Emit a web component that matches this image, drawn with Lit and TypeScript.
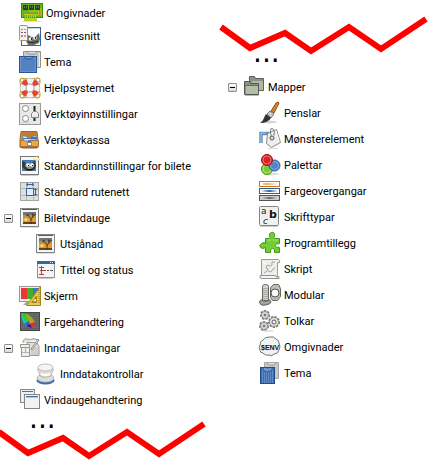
import { LitElement, html, svg, css, nothing, type TemplateResult } from "lit";
import { customElement, property, state } from "lit/decorators.js";

interface Item {
  label: string;
  icon: string;
  lead?: boolean;
  children?: Item[];
}

const photo = svg`
  <rect x="1.500" y="1.500" width="18" height="18" fill="#f4f4f4" stroke="#858585"/>
  <rect x="3" y="2" width="15" height="1" fill="#2f5fae"/>
  <rect x="4" y="5" width="13" height="12" fill="#77766e"/>
  <rect x="4" y="8" width="13" height="3" fill="#b3935c"/>
  <rect x="4" y="11" width="13" height="4" fill="#e79a2c"/>
  <circle cx="7" cy="12.500" r="1.600" fill="#ffd867"/>
  <rect x="4" y="15" width="13" height="2" fill="#63431c"/>
  <path d="M12 17V12L8.500 7M12 13L15 7M13.500 10L17 7M10 9L7 8M14 9L13 6" fill="none" stroke="#3a2d1e" stroke-width="0.800"/>
  <path d="M2 20.500h17" stroke="#ddd"/>`;

const icons: Record<string, TemplateResult> = {
  board: svg`
    <rect x="0.500" y="1.500" width="21" height="14" fill="#62b51c" stroke="#438610"/>
    <path d="M3 16h13v3H3z" fill="#c4d52a"/>
    <path d="M4.500 12v7M6.500 12v7M8.500 12v7M10.500 12v7M12.500 12v7M14.500 12v7" stroke="#d9b62a"/>
    <path d="M3 12.500h9M8.500 10v-1h9v4h-5M20 6v8" fill="none" stroke="#d6be25"/>
    <path d="M2 3h5v5H2zM8 3h5v5H8zM14 3h5v5h-5z" fill="#303b2c"/>
    <path d="M3 5h3M9 5h3M15 5h3" stroke="#91a383" stroke-dasharray="1 1"/>
    <path d="M1 19.500h19" stroke="#ddd"/>`,
  interface: svg`
    <rect x="2.500" y="2.500" width="19" height="18" fill="#fff" stroke="#3465a4"/>
    <path d="M3 3h18v1H3z" fill="#c7daf0"/>
    <path d="M9 10l4 2h3l4-4 1 6-1 4-5 2H9l-2-4z" fill="#6b6b65"/>
    <circle cx="11.500" cy="14" r="1.800" fill="#eee"/><circle cx="16" cy="13" r="1.800" fill="#eee"/>
    <path d="M12 13h1v2h-1zM16 12h1v2h-1z" fill="#222"/><path d="M9 17q5 2 10-1" fill="none" stroke="#292925"/>
    <rect x="0.500" y="0.500" width="8" height="15" rx="1" fill="#f2f2ef" stroke="#969691"/>
    <path d="M2 4h2v1H2z" fill="#58b844"/><path d="M5 4h2v1H5z" fill="#82c878"/>
    <path d="M2 7h2v1H2z" fill="#e52d2d"/><path d="M5 7h2v1H5z" fill="#3d75c4"/>
    <path d="M2 10h2v2H2z" fill="#bd6fbd"/><path d="M5 10h2v2H5z" fill="#eda33e"/>`,
  theme: svg`
    <path d="M4.500 0.500h17v16h-17z" fill="#cacac5" stroke="#92928d"/>
    <path d="M8 1l2 2h6l2-2" fill="#e4e4e0" stroke="#92928d"/><path d="M20.500 2v14" stroke="#eee"/>
    <rect x="0.500" y="5.500" width="17" height="16" fill="#5481c0" stroke="#2c5592"/>
    <path d="M1.500 20.500v-14h15v14z" fill="none" stroke="#6a94cf"/>
    <path d="M5 6l2 2h5l2-2" fill="#6f97cf" stroke="#2c5592"/>`,
  themeLined: svg`
    <path d="M5.500 0.500h14v16h-14z" fill="#c8c8c3" stroke="#a6a6a1"/>
    <path d="M8 1l2 2h5l2-2" fill="#e4e4e0" stroke="#92928d"/>
    <rect x="1.500" y="5.500" width="14" height="16" fill="#396bb1" stroke="#234c88"/>
    <path d="M3.500 8v13M5.500 10v11M7.500 10v11M9.500 10v11M11.500 10v11M13.500 8v13" stroke="#5f8cc8"/>
    <path d="M5 6l1 2h5l1-2" fill="#5a87c5" stroke="#8fb0dc"/>`,
  help: svg`
    <g fill="none" stroke="#c9a438"><path d="M2 9Q-1 1 4 1.500L9 2M13 2l5-1q5 0 2 8M2 13q-3 8 2 8l5-1M13 20l5 1q5-1 2-8"/>
    <circle cx="3" cy="3" r="2"/><circle cx="19" cy="3" r="2"/><circle cx="3" cy="19" r="2"/><circle cx="19" cy="19" r="2"/></g>
    <circle cx="11" cy="11" r="7" fill="none" stroke="#999" stroke-width="6.500"/>
    <circle cx="11" cy="11" r="7" fill="none" stroke="#f3f1ed" stroke-width="5.500"/>
    <circle cx="11" cy="11" r="7" fill="none" stroke="#e4432f" stroke-width="5.500" stroke-dasharray="5 6" stroke-dashoffset="-3"/>
    <circle cx="11" cy="11" r="4" fill="#fff" stroke="#aaa"/>`,
  toolOptions: svg`
    <rect x="0.500" y="0.500" width="21" height="21" fill="#e8e8e6" stroke="#999"/>
    <circle cx="6.500" cy="5.500" r="3" fill="#fff" stroke="#898989"/>
    <circle cx="6.500" cy="15.500" r="3" fill="#fff" stroke="#898989"/>
    <path d="M15.500 3v15" stroke="#222" stroke-width="2"/>
    <path d="M12.500 10.500l2-2h3l2 2v4h-7z" fill="#eee" stroke="#888"/>
    <path d="M2 19.500h9" stroke="#ccc"/>`,
  toolbox: svg`
    <path d="M2 2.500h16l1 8v8H1v-8z" fill="#d68a32" stroke="#a76520"/>
    <path d="M3 3h14v5H3z" fill="#c27a30"/>
    <path d="M1.500 11.500h18v6h-18z" fill="#eca74a" stroke="#b3722b"/>
    <path d="M3 7h4l2 2h3l2-2h4v4h-6l-2 1H5z" fill="#dbe5f0" stroke="#6b87a6"/>
    <path d="M4 9.500h12" stroke="#4a79b8"/><path d="M12 8h6v2h-6z" fill="#4273b1"/>
    <rect x="8.500" y="13.500" width="4" height="3" fill="#fff" stroke="#888"/><path d="M9.500 13v-1h2v1" fill="none" stroke="#555"/>
    <path d="M3 19.500h15" stroke="#b9aea1"/>`,
  newImage: svg`
    <rect x="1.500" y="1.500" width="18" height="18" fill="#f6f6f4" stroke="#777"/>
    <rect x="3" y="5" width="14" height="11" fill="#4679b8"/>
    <path d="M3 6l4 2h6l3-2 1 5-1 3-4 2H8l-5-4z" fill="#373a3a"/>
    <path d="M7 8h7l1 4-3 2H9l-3-3z" fill="#8e8e88"/>
    <circle cx="9" cy="10" r="1.800" fill="#fff"/><circle cx="13" cy="10" r="1.800" fill="#fff"/>
    <path d="M9 10h1v1H9zM13 10h1v1h-1zM8 14h6v1H8z" fill="#181818"/>
    <path d="M18 0l1 3 3 1-3 1-1 3-1-3-3-1 3-1z" fill="#f4cc62"/><circle cx="18" cy="4" r="2" fill="#fff3b1"/>
    <path d="M2 20.500h17" stroke="#ccc"/>`,
  grid: svg`
    <rect x="1.500" y="1.500" width="18" height="18" fill="#dddfdd" stroke="#a4a6a4"/>
    <path d="M2 7.500h17M2 14.500h17M7.500 2v17M14.500 2v17" stroke="#b4b7b4"/>
    <rect x="7.500" y="7.500" width="7" height="7" fill="#e6ebf2" stroke="#3465a4"/>
    <path d="M8 3.500h6M16.500 8v6" stroke="#3465a4"/>
    <path d="M7 3.500l2-2v4zM15 3.500l-2-2v4zM16.500 7l-2 2h4zM16.500 15l-2-2h4z" fill="#3465a4"/>`,
  photo,
  title: svg`
    <rect x="2.500" y="2.500" width="17" height="16" fill="#f4f4f2" stroke="#909090"/>
    <path d="M2 2h18v3H2z" fill="#3465a4"/><path d="M15 3h1v1h-1zM17 3h1v1h-1z" fill="#dce9f8"/>
    <path d="M6.500 7v9" stroke="#c83636"/><path d="M4 8.500h5M4 15.500h5" stroke="#c83636"/><path d="M5 11.500h6" stroke="#9a4545"/>
    <path d="M12 11.500h2M15 11.500h3" stroke="#555"/><path d="M3 19.500h15" stroke="#ccc"/>`,
  display: svg`
    <rect x="0.500" y="1.500" width="21" height="15" fill="#eee" stroke="#999"/>
    <path d="M2 3h6v11H2z" fill="#ed3535"/><path d="M8 3h6v11H8z" fill="#3cb22b"/><path d="M14 3h6v11h-6z" fill="#4377bd"/>
    <path d="M7 17h7v3H4z" fill="#aaa"/>
    <path fill-rule="evenodd" d="M21.500 1.500v19H7.500zM17.500 11v6.500h-5z" fill="#e9c84e" stroke="#a98614"/>
    <path d="M20 5v13" stroke="#8b701b" stroke-dasharray="1 1"/>`,
  color: svg`
    <rect x="1.500" y="1.500" width="19" height="18" fill="#606060" stroke="#454545"/>
    <path d="M4 2v17M7 2v17M10 2v17M13 2v17M16 2v17M19 2v17M2 4h18M2 7h18M2 10h18M2 13h18M2 16h18" stroke="#747474" stroke-dasharray="1 1"/>
    <path d="M2 3q2-2 4 0l7 7-4 5z" fill="#35c735"/><path d="M2 3l7 11-2 1q-5-6-5-12z" fill="#22c9b4"/>
    <path d="M5 13l5-3 1 6z" fill="#335bea"/><path d="M6 2q7 3 10 9l-6-1z" fill="#9cae18"/>
    <path d="M10 9l6 2-5 2z" fill="#f18b24"/><path d="M10 13l7-2-3 5z" fill="#ef2929"/><path d="M7 15l4-2 2 4z" fill="#351b91"/>`,
  devices: svg`
    <path d="M4 6q0-5 4-4t5 0 6 1M8 5.500h10l2 4v9H9z" fill="#e1e1dd" stroke="#999"/>
    <path d="M1.500 7.500h9v3h-9zM2.500 10.500v9h8v-9" fill="#eeeeeb" stroke="#969691"/>
    <path d="M6.500 11v4M3 15.500h7" stroke="#b5b5b0"/>
    <path d="M12 10h7v8h-7z" fill="#d0d0cb"/><path d="M12 12L19 2l1 1-7 10z" fill="#f5f5f1" stroke="#8f8f8a"/>`,
  controller: svg`
    <ellipse cx="10.500" cy="17.500" rx="9" ry="4" fill="#3d69ac"/><ellipse cx="10.500" cy="15" rx="8.500" ry="4" fill="#deded9" stroke="#bbb"/>
    <path d="M3 5v3q2 2 2 5 5 3 11 0 0-3 2-5V5z" fill="#deded9" stroke="#b5b5b5"/>
    <ellipse cx="10.500" cy="4.500" rx="7.500" ry="3.500" fill="#f5f5f3" stroke="#bbb"/><path d="M6 11q4 2 9 0" fill="none" stroke="#fff" stroke-width="2"/>`,
  windows: svg`
    <rect x="1.500" y="0.500" width="14" height="13" fill="#eee" stroke="#888"/><path d="M3 2h11v1H3z" fill="#4274b5"/>
    <rect x="5.500" y="5.500" width="15" height="14" fill="#f2f2f0" stroke="#858585"/><path d="M7 7h12v1H7z" fill="#4274b5"/><path d="M7 8h12v1H7z" fill="#a9c4e5"/>`,
  folders: svg`
    <path d="M6.500 14.500v-14h5l1 2h8v12z" fill="#8c9188" stroke="#5d6159"/><path d="M9 5h11v9H9z" fill="#aeb9a2"/>
    <path d="M1.500 18.500v-13h5l1 2h8v11z" fill="#8c9188" stroke="#555953"/><path d="M3 10h12v8H3z" fill="#b2bea6"/>
    <path d="M2 9.500h13" stroke="#656962"/><path d="M2 19.500h14" stroke="#b9b9b9"/>`,
  brush: svg`
    <ellipse cx="10" cy="20" rx="8" ry="1.500" fill="#d5d5d5"/>
    <path d="M17 1l2-1 1 1-5 10-3-2z" fill="#d0852f" stroke="#8f5318"/>
    <path d="M11 9l4 3-3 4-4-4z" fill="#c8cdd0" stroke="#777"/>
    <path d="M7 12l5 4q-3 5-11 5 3-2 4-5t2-4z" fill="#333"/>`,
  bucket: svg`
    <path d="M2 15V5.500h8" fill="none" stroke="#638eb9" stroke-width="3.500"/>
    <path d="M2 15V5h5" fill="none" stroke="#a8c6e4"/>
    <path d="M8.500 5.500l9-4 4 13-9 5-5-4z" fill="#ededeb" stroke="#888" stroke-linejoin="round"/>
    <path d="M10 7l7-4 3 10" fill="none" stroke="#fff"/><circle cx="13" cy="10" r="2" fill="#ddd" stroke="#555"/>
    <path d="M12.500 9Q10 0 13 0.500t2 7" fill="none" stroke="#777"/><path d="M9 20.500h10" stroke="#ddd"/>`,
  palette: svg`
    <ellipse cx="12" cy="20" rx="8" ry="1.500" fill="#dedede"/>
    <circle cx="8" cy="15" r="5.500" fill="#78cf32" stroke="#4e981a"/><circle cx="8" cy="15" r="4" fill="none" stroke="#a9eb70"/>
    <circle cx="15.500" cy="11.500" r="5.500" fill="#5484c4" stroke="#2f5e9e"/><circle cx="15.500" cy="11.500" r="4" fill="none" stroke="#84abdf"/>
    <circle cx="8" cy="6" r="5.500" fill="#d8222a" stroke="#a61118"/><circle cx="8" cy="6" r="4" fill="none" stroke="#ef777b"/>`,
  gradient: svg`
    <defs><linearGradient id="o"><stop stop-color="#fff"/><stop offset=".3" stop-color="#e8aa54"/><stop offset="1" stop-color="#fff"/></linearGradient>
    <linearGradient id="b"><stop stop-color="#fff"/><stop offset=".5" stop-color="#2d64ab"/><stop offset="1" stop-color="#fff"/></linearGradient>
    <linearGradient id="k"><stop stop-color="#ddd"/><stop offset=".5" stop-color="#666"/><stop offset="1" stop-color="#ddd"/></linearGradient></defs>
    <rect x="0.500" y="1.500" width="20" height="5" fill="#fff" stroke="#ce731b"/><rect x="2" y="3" width="17" height="2" fill="url(#o)"/>
    <rect x="0.500" y="8.500" width="20" height="5" fill="#fff" stroke="#2c5c9c"/><rect x="2" y="10" width="17" height="2" fill="url(#b)"/>
    <rect x="0.500" y="15.500" width="20" height="5" fill="#ccc" stroke="#555"/><rect x="2" y="17" width="17" height="2" fill="url(#k)"/>`,
  fonts: svg`
    <rect x="0.500" y="0.500" width="19" height="19" rx="1" fill="#f0f0ee" stroke="#858585"/>
    <text x="2" y="8" font-family="DejaVu Sans, sans-serif" font-size="9" fill="#222">a</text>
    <text x="10" y="12" font-family="DejaVu Sans, sans-serif" font-size="11" font-weight="bold" fill="#111">b</text>
    <text x="4" y="18" font-family="DejaVu Sans, sans-serif" font-size="9" font-style="italic" fill="#222">c</text>
    <path d="M1 20.500h18" stroke="#ccc"/>`,
  plugin: svg`
    <path d="M6.500 6.500h4q1-1 0-3t2-3 3 3q-1 2 0 3h5v5q-1 1-3 0-2 2 0 4 2-1 3 0v5h-5q1-4-2-4t-2 4h-5v-5q-3 2-5 0t1-4 4 0z" fill="#72ce32" stroke="#46961b" stroke-linejoin="round"/>
    <path d="M8 8h4M14 8h5" fill="none" stroke="#a8ec73"/>`,
  script: svg`
    <path d="M2.500 1.500h17q2 1 1 3h-2v14h-16z" fill="#ededea" stroke="#999"/>
    <path d="M1 17.500h15q2 3 4 1v2H3q-3 0-2-3z" fill="#f4f4f2" stroke="#929292"/>
    <path d="M5 15l3-2 1-2-2-1 1-3 3 1 2-1v-3h3M9 13l3 1 2-3 2-1" fill="none" stroke="#a5a5a5"/>
    <path d="M3 3l4 3" stroke="#fff"/>`,
  module: svg`
    <path d="M11.500 3.500l3-3h5l2 4v8l-3 4h-5l-2-3z" fill="#babdb6" stroke="#656862"/>
    <circle cx="16" cy="9" r="4" fill="#fff" stroke="#50534e"/>
    <path d="M3.500 2.500q0-2 3-2t3 2v14h-6z" fill="#d3d5d1" stroke="#656862"/>
    <path d="M4 4.500h5M4 6.500h5M4 8.500h5M4 10.500h5M4 12.500h5M4 14.500h5" stroke="#a9aca6"/>
    <path d="M.5 18q0-2 3-2.500v1q3 2 6 0v-1q2.500.5 2.500 2.500t-5.500 3-6-3z" fill="#a2a59f" stroke="#5b5d58"/>`,
  gears: svg`
    <g fill="none" stroke="#777973" stroke-width="3" stroke-dasharray="2 1"><circle cx="6" cy="5" r="3.500"/><circle cx="5" cy="16" r="3.500"/><circle cx="15" cy="12" r="4.500"/></g>
    <g fill="#e5e5e1" stroke="#8a8c86"><circle cx="6" cy="5" r="3.500"/><circle cx="5" cy="16" r="3.500"/><circle cx="15" cy="12" r="4.500"/></g>
    <g fill="#fff" stroke="#555"><circle cx="6" cy="5" r="1"/><circle cx="5" cy="16" r="1"/><circle cx="15" cy="12" r="2"/></g><path d="M4 21h10" stroke="#ccc"/>`,
  env: svg`
    <path d="M4 17q-3 0-3-3-1.500-3 0-5 0-4 3-5 2-3 6-3 5-1 7 2 3 1 3 4 2 4 0 7-1 4-5 4-2 3-5 1-4 1-6-2z" fill="#f2f2f1" stroke="#747474"/>
    <text x="2" y="14" font-family="Liberation Sans, sans-serif" font-size="7" font-weight="bold" fill="#111">$ENV</text>`,
};

const left: Item[] = [
  { label: "Omgivnader", icon: "board", lead: true },
  { label: "Grensesnitt", icon: "interface" },
  { label: "Tema", icon: "theme" },
  { label: "Hjelpsystemet", icon: "help" },
  { label: "Verktøyinnstillingar", icon: "toolOptions" },
  { label: "Verktøykassa", icon: "toolbox" },
  { label: "Standardinnstillingar for bilete", icon: "newImage" },
  { label: "Standard rutenett", icon: "grid" },
  { label: "Biletvindauge", icon: "photo", children: [
    { label: "Utsjånad", icon: "photo" },
    { label: "Tittel og status", icon: "title" },
  ] },
  { label: "Skjerm", icon: "display" },
  { label: "Fargehandtering", icon: "color" },
  { label: "Inndataeiningar", icon: "devices", children: [
    { label: "Inndatakontrollar", icon: "controller" },
  ] },
  { label: "Vindaugehandtering", icon: "windows" },
];

const right: Item[] = [
  { label: "Mapper", icon: "folders", children: [
    { label: "Penslar", icon: "brush" },
    { label: "Mønsterelement", icon: "bucket" },
    { label: "Palettar", icon: "palette" },
    { label: "Fargeovergangar", icon: "gradient" },
    { label: "Skrifttypar", icon: "fonts" },
    { label: "Programtillegg", icon: "plugin" },
    { label: "Skript", icon: "script" },
    { label: "Modular", icon: "module" },
    { label: "Tolkar", icon: "gears" },
    { label: "Omgivnader", icon: "env" },
    { label: "Tema", icon: "themeLined" },
  ] },
];

@customElement("category-tree")
export class CategoryTree extends LitElement {
  @property({ attribute: false }) items: Item[] = [];
  @state() private closed = new Set<string>();

  static styles = css`
    :host { display: block; }
    ul { list-style: none; margin: 0; padding: 0; }
    .nested { padding-left: 16px; }
    .row { display: flex; align-items: center; height: 26px; padding-left: 4px; white-space: nowrap; }
    .lead { height: 20px; padding: 3px 0 0 6px; }
    .slot { display: flex; width: 9px; margin-right: 6px; }
    .toggle { width: 9px; height: 9px; padding: 0; border: 1px solid #8e8e8e; border-radius: 1px; background: linear-gradient(#fff, #dcdad2); display: flex; align-items: center; justify-content: center; }
    .sign { width: 5px; height: 1px; background: #000; }
    .icon { width: 22px; height: 22px; margin-right: 3px; flex: none; overflow: visible; }
    .label { padding-top: 2px; }
  `;

  private toggle(label: string) {
    const next = new Set(this.closed);
    if (!next.delete(label)) next.add(label);
    this.closed = next;
  }

  private renderItem(item: Item): TemplateResult {
    const open = !this.closed.has(item.label);
    return html`<li>
      <div class="row ${item.lead ? "lead" : ""}">
        <span class="slot">${item.children
          ? html`<button class="toggle" aria-label=${item.label} aria-expanded=${open} @click=${() => this.toggle(item.label)}><span class="sign"></span></button>`
          : nothing}</span>
        <svg class="icon" viewBox="0 0 22 22" aria-hidden="true">${icons[item.icon]}</svg>
        <span class="label">${item.label}</span>
      </div>
      ${item.children && open ? html`<ul class="nested">${item.children.map((c) => this.renderItem(c))}</ul>` : nothing}
    </li>`;
  }

  render() {
    return html`<ul>${this.items.map((i) => this.renderItem(i))}</ul>`;
  }
}

@customElement("app-root")
export class AppRoot extends LitElement {
  static styles = css`
    :host { display: grid; grid-template-columns: minmax(0, 224fr) minmax(0, 205fr); align-items: start; background: #fff; color: #000; font: 11px/14px Tahoma, Roboto, sans-serif; overflow: hidden; }
    .tear { display: block; width: 206px; height: 40px; overflow: visible; }
    .top { margin: 15px 0 0 -2px; }
    .bottom { margin-top: -5px; }
    .more { font: 28px/12px "DejaVu Sans", sans-serif; padding-left: 29px; }
    .after { margin: -8px 0 15px; }
  `;

  private tear(place: string) {
    return html`<svg class="tear ${place}" viewBox="0 0 206 40" aria-hidden="true">
      <polyline points="-1,12 28,33 63,18 89,36 127,12 159,34 204,4" fill="none" stroke="#f00" stroke-width="6"/>
    </svg>`;
  }

  render() {
    return html`
      <section>
        <category-tree .items=${left}></category-tree>
        <div class="more">...</div>
        ${this.tear("bottom")}
      </section>
      <section>
        ${this.tear("top")}
        <div class="more after">...</div>
        <category-tree .items=${right}></category-tree>
      </section>`;
  }
}
